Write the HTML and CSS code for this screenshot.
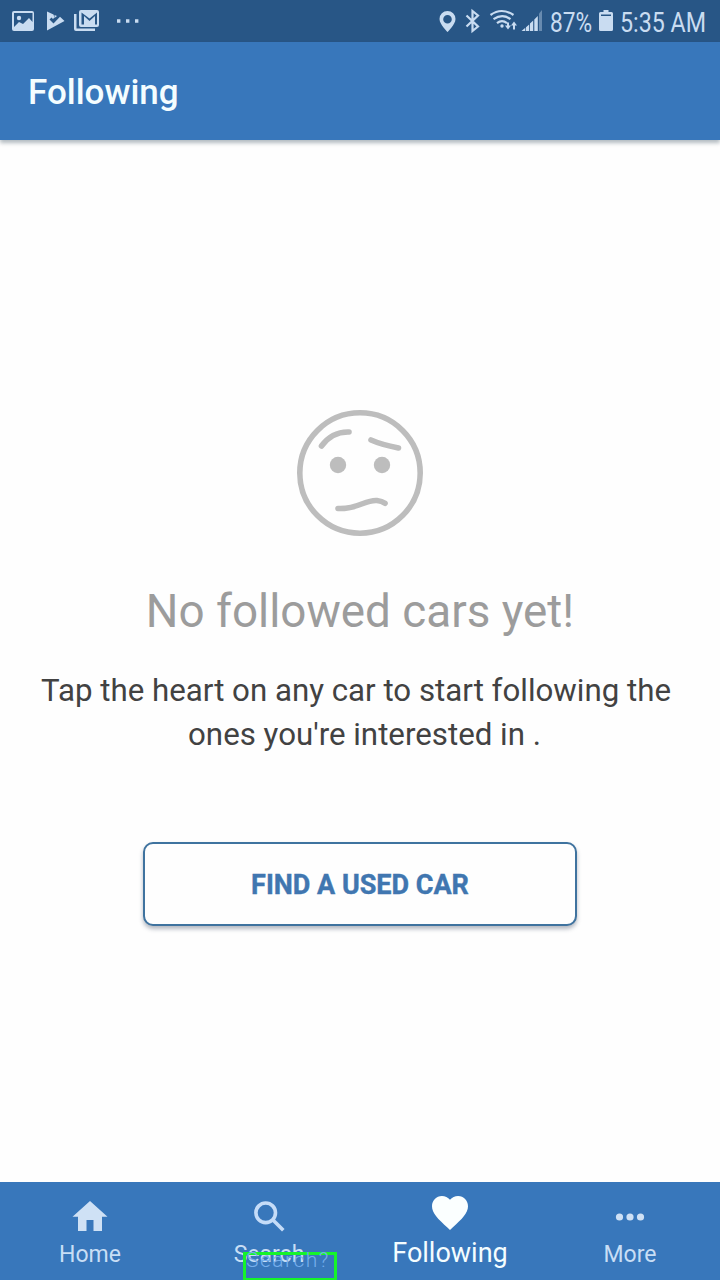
FILE: index.html
```html
<!DOCTYPE html>
<html lang="en">
<head>
<meta charset="utf-8">
<title>Following</title>
<link rel="stylesheet" href="styles.css">
</head>
<body>
<div class="screen">
  <div class="status">
    <svg class="status-icons" width="150" height="42" viewBox="0 0 150 42">
      <path fill-rule="evenodd" d="M14 11h18a2 2 0 0 1 2 2v16a2 2 0 0 1-2 2H14a2 2 0 0 1-2-2V13a2 2 0 0 1 2-2zM14 13v14l5-5 4 2 6-6 3.500 4V13z"/>
      <circle cx="19" cy="18" r="2.200"/>
      <path d="M47 11.500 53.500 14.500 54.500 17.500 53 19 51.500 17.500 49.500 19.500 53.500 23.500 60 16.800 64.500 21 47 30.500z"/>
      <path d="M54.500 15 57 16l-2.500 2z"/>
      <path fill-rule="evenodd" d="M81 10h16a2 2 0 0 1 2 2v13a2 2 0 0 1-2 2H81a2 2 0 0 1-2-2V12a2 2 0 0 1 2-2zM81.500 12.500V24.500H84V16l5.500 5 5.500-5v8.500h2V12.500L89.500 18.500z"/>
      <path d="M74 14h2.500v14.500H95V31H76a2 2 0 0 1-2-2z"/>
      <path d="M117 19.300h3.400v3.400H117zM126 19.300h3.400v3.400H126zM135 19.300h3.400v3.400H135z"/>
    </svg>
    <div class="status-right">
      <svg width="113" height="42" viewBox="435 0 113 42">
        <path fill-rule="evenodd" d="M447.500 11a8 8 0 0 1 8 8c0 5.500-8 13-8 13s-8-7.500-8-13a8 8 0 0 1 8-8zm0 4a4.300 4.300 0 1 0 0 8.600 4.300 4.300 0 0 0 0-8.600z"/>
        <path class="stroke" d="m466.500 15.500 11.500 11-5.500 4.500V11l5.500 4.500-11.500 11"/>
        <path class="stroke" d="M490.500 15q11-8 23 0M493.500 19.200q9-6 17 0M497 23.200q5-4 10 0"/>
        <circle cx="502" cy="26" r="1.700"/>
        <path d="M507 22.500h2v3h2l-3 4-3-4h2zM513 29.500h2v-4h2l-3-4-3 4h2z"/>
        <path d="m521.500 31 3.800-3.300V31zM526 27.200l3.200-2.800V31H526zM530 23.500l3.200-3V31H530zM534.300 19.500l3.500-3.500v15h-3.500z"/>
        <path class="faint" d="m539 13.500 3-3.500v21h-3z"/>
      </svg>
      <span class="battery-text"><span>87%</span></span>
      <svg width="16" height="42" viewBox="598 0 16 42">
        <path fill-rule="evenodd" d="M603.500 10h5v2h3a1.500 1.500 0 0 1 1.500 1.500v16a1.500 1.500 0 0 1-1.500 1.500h-11a1.500 1.500 0 0 1-1.500-1.500v-16a1.500 1.500 0 0 1 1.500-1.500h3zM601 14.500V16h10v-1.500z"/>
      </svg>
      <span class="clock"><span>5:35 AM</span></span>
    </div>
  </div>
  <header class="appbar">Following</header>
  <main class="empty">
    <svg class="face" width="126" height="126" viewBox="297 410 126 126">
      <circle cx="360" cy="473" r="60.200"/>
      <path d="M321.500 446q10.500-14.500 27.500-14M371 440q10 4.500 27.500 8M338 508.500c20 1 27-9 39-8q5 .5 8 2.800"/>
      <circle class="eye" cx="338" cy="465" r="8.200"/>
      <circle class="eye" cx="382" cy="465" r="8.200"/>
    </svg>
    <h1 class="title">No followed cars yet!</h1>
    <p class="hint">Tap the heart on any car to start following the<br><span class="hint-end">ones you're interested in .</span></p>
    <button class="find">FIND A USED CAR</button>
  </main>
  <nav class="tabs">
    <div class="tab">
      <svg width="36" height="34" viewBox="72 1198 36 34"><path d="m90 1201 17.500 15.800H102V1231h-8.500v-11h-7v11H78v-14.200h-5.500z"/></svg>
      <span>Home</span>
    </div>
    <div class="tab search">
      <svg width="36" height="34" viewBox="252 1198 36 34"><circle class="lens" cx="265.700" cy="1212.800" r="9.800"/><path class="lens" d="m273 1220 10.300 10.300"/></svg>
      <span>Search</span>
      <div class="marker">Search?</div>
    </div>
    <div class="tab active">
      <svg width="36" height="34" viewBox="2 3 20 18.350" preserveAspectRatio="none"><path d="m12 21.350-1.450-1.320C5.400 15.360 2 12.280 2 8.500 2 5.420 4.420 3 7.500 3c1.740 0 3.410.81 4.500 2.090C13.090 3.810 14.760 3 16.500 3 19.580 3 22 5.420 22 8.500c0 3.780-3.400 6.860-8.550 11.540z"/></svg>
      <span>Following</span>
    </div>
    <div class="tab">
      <svg width="36" height="34" viewBox="612 1198 36 34"><circle cx="619.500" cy="1217" r="3.600"/><circle cx="630" cy="1217" r="3.600"/><circle cx="640.500" cy="1217" r="3.600"/></svg>
      <span>More</span>
    </div>
  </nav>
</div>
</body>
</html>
```
FILE: styles.css
```css
* { box-sizing: border-box; }
body { margin: 0; font-family: Roboto, "Liberation Sans", sans-serif; }
.screen { width: 720px; height: 1280px; display: flex; flex-direction: column; background: #fefefe; overflow: hidden; }
svg { display: block; flex: none; }

.status { height: 42px; background: #285686; color: #c9dcf1; display: flex; justify-content: space-between; }
.status svg { fill: #c9dcf1; }
.status .stroke { fill: none; stroke: #c9dcf1; stroke-width: 2.2; }
.status .faint { opacity: .4; }
.status-right { display: flex; padding-right: 14px; line-height: 46px; font-size: 27px; white-space: nowrap; }
.battery-text { width: 50px; padding-left: 2px; }
.clock { width: 92px; padding-left: 6px; }
.battery-text span, .clock span { display: inline-block; transform-origin: 0 50%; transform: scaleX(.84); }
.clock span { transform: scaleX(.86); }

.appbar { height: 98px; flex: none; padding-left: 28px; background: #3877bb; color: #f4fdff; font-size: 35px; font-weight: 500; line-height: 102px; box-shadow: 0 3px 4px rgba(0, 30, 50, .3); }

.empty { flex: 1; display: flex; flex-direction: column; align-items: center; padding-top: 270px; }
.face { fill: none; stroke: #bdbdbd; stroke-width: 5.6; stroke-linecap: round; }
.face .eye { fill: #bdbdbd; stroke: none; }
.title { margin: 46px 0 0; font-size: 45.8px; line-height: 60px; font-weight: 400; color: #9c9c9c; white-space: nowrap; }
.hint { margin: 27px 0 0; padding-right: 8px; font-size: 31.25px; line-height: 44px; color: #424242; text-align: center; white-space: nowrap; }
.hint-end { padding-left: 17px; }
.find { width: 434px; height: 84px; margin-top: 85px; padding: 2px 0 0; border: 2px solid #3f739f; border-radius: 10px; background: #fefefe; color: #4076b0; font: 700 27px Roboto, sans-serif; -webkit-text-stroke: .4px #4076b0; box-shadow: 0 3px 4px rgba(40, 55, 80, .35); }

.tabs { height: 98px; flex: none; display: grid; grid-template-columns: repeat(4, 180px); background: #3877bb; }
.tab { display: flex; flex-direction: column; align-items: center; padding-top: 16px; color: #c8def5; fill: #cfe1f5; font-size: 23px; line-height: 30px; }
.tab span { margin-top: 8px; }
.search { position: relative; }
.search > span { margin-right: 2px; }
.lens { fill: none; stroke: #c5dcf8; stroke-width: 3.6; }
.active { padding-top: 14px; color: #f4fdff; fill: #fbffff; font-size: 27px; }
.marker { position: absolute; left: 63px; top: 70px; width: 94px; height: 29px; border: 3px solid #16f42a; color: #75aeec; font-size: 21px; font-weight: 300; line-height: 11px; letter-spacing: 1.5px; }
```
